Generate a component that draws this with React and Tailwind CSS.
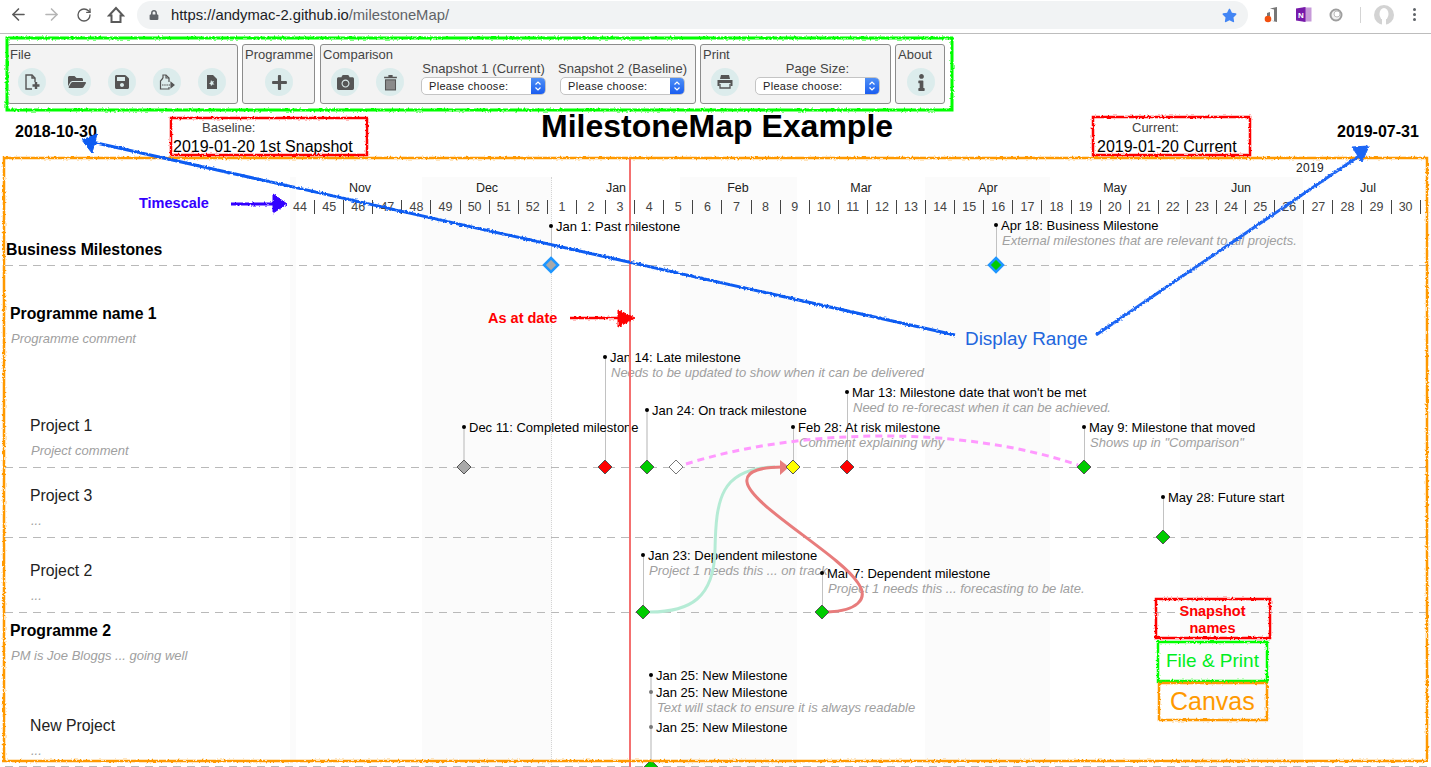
import React from "react";
import { ArrowLeft, ArrowRight, RotateCw } from "lucide-react";
import { FaLock, FaStar, FaFolderOpen, FaSave, FaPlus, FaCamera, FaInfo } from "react-icons/fa";

const Y0 = 158;
const weeks = [44,45,46,47,48,49,50,51,52,1,2,3,4,5,6,7,8,9,10,11,12,13,14,15,16,17,18,19,20,21,22,23,24,25,26,27,28,29,30];
const months = [["Nov",360],["Dec",487],["Jan",616],["Feb",738],["Mar",861],["Apr",988],["May",1115],["Jun",1241],["Jul",1368]];
const bands = [[290,296],[422,552],[680,797],[925,1050],[1180,1303]];
const hlines = [265,467,537,612,766];

const labels = [
  ["Business Milestones",6,250,"head"],
  ["Programme name 1",10,314,"head"],
  ["Programme comment",11,339,"note"],
  ["Project 1",30,426,"proj"],
  ["Project comment",31,451,"note"],
  ["Project 3",30,496,"proj"],
  ["...",31,521,"note"],
  ["Project 2",30,571,"proj"],
  ["...",31,596,"note"],
  ["Programme 2",10,631,"head"],
  ["PM is Joe Bloggs ... going well",11,656,"note"],
  ["New Project",30,726,"proj"],
  ["...",31,751,"note"],
];

const milestones = [
  { x:551, y:226, t:"Jan 1: Past milestone", dy:265, fill:"#a9a9a9", stroke:"#1e96ff", sw:2.5 },
  { x:996, y:225, t:"Apr 18: Business Milestone", c:"External milestones that are relevant to all projects.", dy:265, fill:"#00cc00", stroke:"#1e96ff", sw:2.5 },
  { x:605, y:357, t:"Jan 14: Late milestone", c:"Needs to be updated to show when it can be delivered", dy:467, fill:"#ff0000" },
  { x:847, y:392, t:"Mar 13: Milestone date that won't be met", c:"Need to re-forecast when it can be achieved.", dy:467, fill:"#ff0000" },
  { x:647, y:410, t:"Jan 24: On track milestone", dy:467, fill:"#00cc00", thick:true },
  { x:464, y:427, t:"Dec 11: Completed milestone", dy:467, fill:"#a9a9a9", thick:true },
  { x:793, y:427, t:"Feb 28: At risk milestone", c:"Comment explaining why", dy:467, fill:"#ffff00" },
  { x:1084, y:427, t:"May 9: Milestone that moved", c:'Shows up in "Comparison"', dy:467, fill:"#00cc00" },
  { x:1163, y:497, t:"May 28: Future start", dy:537, fill:"#00cc00" },
  { x:643, y:555, t:"Jan 23: Dependent milestone", c:"Project 1 needs this ... on track", dy:612, fill:"#00cc00" },
  { x:822, y:573, t:"Mar 7: Dependent milestone", c:"Project 1 needs this ... forecasting to be late.", dy:612, fill:"#00cc00" },
  { x:651, y:675, t:"Jan 25: New Milestone", dy:767, fill:"#00cc00", thick:true },
  { x:651, y:692, t:"Jan 25: New Milestone", c:"Text will stack to ensure it is always readable", gray:true },
  { x:651, y:727, t:"Jan 25: New Milestone", gray:true },
];

function Circle({ children }) {
  return <div className="w-[28px] h-[28px] rounded-full bg-[#dcecec] flex items-center justify-center text-[#555555] shrink-0">{children}</div>;
}

function Select() {
  return (
    <div className="w-[125px] h-[18px] flex rounded-[5px] border border-[#c4c4c4] bg-white overflow-hidden">
      <div className="flex-1 pl-[7px] text-[11px] leading-[16px] tracking-[0.3px] text-[#222222] whitespace-nowrap">Please choose:</div>
      <div className="w-[14px] bg-gradient-to-b from-[#4f8ff5] to-[#1a5cf0] flex items-center justify-center">
        <svg width="8" height="12" viewBox="0 0 8 12" fill="none" stroke="#ffffff" strokeWidth="1.2"><path d="M1.5 4.5 4 2l2.5 2.5M1.5 7.5 4 10l2.5-2.5" /></svg>
      </div>
    </div>
  );
}

function Panel({ title, className, children }) {
  return (
    <div className={`h-[60px] border border-[#8c8c8c] rounded-[3px] bg-[#f3f3f3] flex flex-col ${className}`}>
      <div className="pl-[2px] h-[17px] pt-[2px] text-[13px] leading-[15px] text-[#444444] whitespace-nowrap">{title}</div>
      <div className="flex-1 flex items-end pb-[7px]">{children}</div>
    </div>
  );
}

function SelectCol({ label }) {
  return (
    <div className="w-[125px] flex flex-col items-center">
      <div className="text-[13px] leading-[14px] tracking-[0.06px] text-[#444444] whitespace-nowrap pb-[1px]">{label}</div>
      <div className="mb-px"><Select /></div>
    </div>
  );
}

const FilePlus = () => (
  <svg width="18" height="18" viewBox="0 0 18 18" fill="none" stroke="#555555" strokeWidth="1.4"><path d="M9 16H3V2h6l3 3v4" /><path d="M9 2v3h3" /><path d="M13 9v7M9.5 12.5h7" strokeWidth="2.4" /></svg>
);
const FileExport = () => (
  <svg width="18" height="18" viewBox="0 0 18 18" fill="none" stroke="#555555" strokeWidth="1.2"><path d="M11 9V5L8 2H5v3" /><path d="M8 2v3h3" /><path d="M5 5 2.500 8v8H11v-2" /><path d="M4 12h8" strokeDasharray="1.500 0.700" /><path d="M13 9.500 16 12l-3 2.500z" fill="#555555" /></svg>
);
const FileImport = () => (
  <svg width="14" height="16" viewBox="0 0 14 16"><path fillRule="evenodd" fill="#555555" d="M2 1h6l4 4v10H2zM6 6l1 1.500 2-.5-1 2 1.500 1.500-2 0L6 12l-.5-2H4l1.500-1.500z" /></svg>
);
const Trash = () => (
  <svg width="15" height="17" viewBox="0 0 14 16"><path d="M5 1h4v1.500h4V4H1V2.500h4z" fill="#555555" /><rect x="2.300" y="5.500" width="9.400" height="9.500" fill="#8a8a8a" stroke="#555555" /></svg>
);
const Printer = () => (
  <svg width="18" height="16" viewBox="0 0 18 16"><path fill="#555555" d="M5 1h8l1 4H4zM1.500 6h15v6h-2V9h-11v3h-2z" /><path fill="none" stroke="#555555" strokeWidth="1.300" d="M4 10v4h10v-4" /></svg>
);
const House = () => (
  <svg className="ml-[1px]" width="18" height="18" viewBox="0 0 18 18" fill="none" stroke="#5a5a5a" strokeWidth="2"><path d="M9 2 2 9.500h2.500V16h9V9.500H16z" strokeLinejoin="miter" /></svg>
);

function BrowserBar() {
  return (
    <div className="h-[34px] border-b border-[#bdbdbd] flex items-start bg-white">
      <div className="w-[137px] h-[29px] flex items-center pl-[9px] gap-[14px] text-[#5a5a5a] shrink-0">
        <ArrowLeft size={19} strokeWidth={2} />
        <ArrowRight size={19} strokeWidth={2} className="text-[#b5b5b5]" />
        <RotateCw size={16} strokeWidth={2} className="ml-[1px]" />
        <House />
      </div>
      <div className="w-[1111px] h-[28px] mt-px rounded-full bg-[#f1f3f4] flex items-center pl-[12px] pr-[11px] shrink-0">
        <FaLock size={10} className="text-[#5f6368]" />
        <div className="ml-[12px] flex-1 text-[14.800px] text-[#202124] whitespace-nowrap">https://andymac-2.github.io<span className="text-[#5f6368]">/milestoneMap/</span></div>
        <FaStar size={15} className="text-[#4285f4]" />
      </div>
      <div className="flex items-center h-[29px] pl-[15px]">
        <svg width="16" height="16" viewBox="0 0 16 16"><path d="M7 1.500 14 0v15l-7-1.500 4 .5V2.500z" fill="#777777" /><path d="M4 6l3-1v4H4z" fill="#777777" /><circle cx="5" cy="12" r="3.300" fill="#f2500f" /></svg>
        <svg className="ml-[16px]" width="17" height="17" viewBox="0 0 17 17"><rect x="8" y="1.500" width="8.500" height="14" fill="#c79ad9" /><path d="M1 2.500 10.500 1v15L1 14.500z" fill="#7719aa" /><text x="3" y="11.500" fontSize="8" fontWeight="700" fill="#ffffff" fontFamily="Liberation Sans, sans-serif">N</text></svg>
        <svg className="ml-[17px]" width="14" height="14" viewBox="0 0 14 14"><circle cx="7" cy="7" r="5.500" fill="#f0f0f0" stroke="#9e9e9e" strokeWidth="2" /><circle cx="8" cy="6" r="3" fill="#ffffff" stroke="#bbbbbb" /></svg>
        <div className="ml-[17px] w-px h-[16px] bg-[#d4d4d4]"></div>
        <svg className="ml-[13px]" width="20" height="20" viewBox="0 0 20 20"><circle cx="10" cy="10" r="10" fill="#d3d3d3" /><ellipse cx="10" cy="9" rx="4.500" ry="6" fill="#ffffff" /><path d="M8 13h4v7H8z" fill="#ffffff" /></svg>
        <div className="ml-[19px] flex flex-col gap-[2px]">
          <div className="w-[3px] h-[3px] rounded-full bg-[#5f6368]"></div>
          <div className="w-[3px] h-[3px] rounded-full bg-[#5f6368]"></div>
          <div className="w-[3px] h-[3px] rounded-full bg-[#5f6368]"></div>
        </div>
      </div>
    </div>
  );
}

function Toolbar() {
  return (
    <div className="h-[76px] pt-[10px] pl-[7px] flex gap-[4px]">
      <Panel title="File" className="w-[231px]">
        <div className="flex gap-[17px] pl-[10px]">
          <Circle><FilePlus /></Circle>
          <Circle><FaFolderOpen size={18} /></Circle>
          <Circle><FaSave size={16} /></Circle>
          <Circle><FileExport /></Circle>
          <Circle><FileImport /></Circle>
        </div>
      </Panel>
      <Panel title="Programme" className="w-[73px]">
        <div className="pl-[22px]"><Circle><FaPlus size={17} /></Circle></div>
      </Panel>
      <Panel title="Comparison" className="w-[376px] ml-px">
        <div className="flex gap-[17px] pl-[10px] items-end">
          <Circle><FaCamera size={17} /></Circle>
          <Circle><Trash /></Circle>
          <div className="flex gap-[14px]">
            <SelectCol label="Snapshot 1 (Current)" />
            <SelectCol label="Snapshot 2 (Baseline)" />
          </div>
        </div>
      </Panel>
      <Panel title="Print" className="w-[191px]">
        <div className="flex gap-[16px] pl-[10px] items-end">
          <Circle><Printer /></Circle>
          <SelectCol label="Page Size:" />
        </div>
      </Panel>
      <Panel title="About" className="w-[50px]">
        <div className="pl-[11px]"><Circle><FaInfo size={17} /></Circle></div>
      </Panel>
    </div>
  );
}

function HeaderRow() {
  return (
    <div className="h-[48px] flex pl-[15px]">
      <div className="w-[158px] pt-[13px] text-[16px] leading-[17px] font-bold text-black whitespace-nowrap">2018-10-30</div>
      <div className="w-[368px] pt-[10px] whitespace-nowrap">
        <div className="pl-[29px] text-[13px] leading-[15px] text-[#444444]">Baseline:</div>
        <div className="pt-[2px] text-[16px] leading-[19px] text-black">2019-01-20 1st Snapshot</div>
      </div>
      <div className="w-[556px] text-[32px] leading-[33px] font-bold text-black whitespace-nowrap">MilestoneMap Example</div>
      <div className="w-[240px] pt-[10px] whitespace-nowrap">
        <div className="pl-[35px] text-[13px] leading-[15px] text-[#444444]">Current:</div>
        <div className="pt-[2px] text-[16px] leading-[19px] text-black">2019-01-20 Current</div>
      </div>
      <div className="pt-[13px] text-[16px] leading-[17px] font-bold text-black whitespace-nowrap">2019-07-31</div>
    </div>
  );
}

function Canvas() {
  return (
    <div className="relative h-[609px]">
      {bands.map(([a, b]) => (
        <div key={a} className="absolute bottom-0 bg-[#fbfbfb]" style={{ left: a, width: b - a, top: 177 - Y0 }} />
      ))}
      <div className="absolute left-[551px] top-[19px] bottom-0 border-l border-dotted border-[#d4d4d4]"></div>

      <div className="absolute left-[1296px] top-[3px] text-[12px] leading-[14px] tracking-[0.3px] text-[#222222]">2019</div>
      {months.map(([m, x]) => (
        <div key={m} className="absolute w-[60px] -ml-[30px] text-center text-[12.500px] leading-[14px] text-[#222222]" style={{ left: x, top: 188 - 7 - Y0 }}>{m}</div>
      ))}
      <div className="absolute left-[286px] top-[42px] flex">
        {weeks.map((w) => (
          <div key={w} className="w-[29.100px] h-[14px] border-r border-[#444444] text-center text-[12.500px] leading-[14px] text-[#444444]">{w}</div>
        ))}
      </div>

      {hlines.map((y) => (
        <div key={y} className="absolute left-[5px] right-[3px] h-px bg-[repeating-linear-gradient(90deg,#b9b9b9_0,#b9b9b9_8px,transparent_8px,transparent_14px)]" style={{ top: y - Y0 }} />
      ))}

      {labels.map(([t, x, y, k]) => (
        <div
          key={t + y}
          className={
            k === "head" ? "absolute whitespace-nowrap text-[15.800px] leading-[18px] font-bold text-black"
            : k === "proj" ? "absolute whitespace-nowrap text-[15.800px] leading-[18px] text-[#222222]"
            : "absolute whitespace-nowrap text-[13px] leading-[18px] italic text-[#a0a0a0]"
          }
          style={{ left: x, top: y - 9 - Y0 }}
        >{t}</div>
      ))}

      {milestones.map((m, i) => (
        <React.Fragment key={i}>
          {m.dy && (
            <div
              className={m.thick ? "absolute w-[2px] bg-[#d9d9d9]" : "absolute w-px bg-[#c2c2c2]"}
              style={{ left: m.thick ? m.x - 1 : m.x, top: m.y - Y0, height: m.dy - m.y }}
            />
          )}
          <div className={m.gray ? "absolute w-[4px] h-[4px] rounded-full bg-[#777777]" : "absolute w-[4px] h-[4px] rounded-full bg-black"} style={{ left: m.x - 2, top: m.y - 2 - Y0 }} />
          <div className="absolute whitespace-nowrap text-[13px] leading-[15px] text-black" style={{ left: m.x + 5, top: m.y - 7.5 - Y0 }}>{m.t}</div>
          {m.c && <div className="absolute whitespace-nowrap text-[13px] leading-[15px] italic text-[#a0a0a0]" style={{ left: m.x + 6, top: m.y + 8 - Y0 }}>{m.c}</div>}
        </React.Fragment>
      ))}

      <div className="absolute left-[629px] top-0 bottom-0 w-[2px] bg-[#f47070]"></div>

      <div className="absolute left-[139px] top-[36px] text-[14.500px] leading-[18px] font-bold text-[#3300ff] whitespace-nowrap">Timescale</div>
      <div className="absolute left-[488px] top-[151px] text-[14.500px] leading-[18px] font-bold text-[#ff0000] whitespace-nowrap">As at date</div>
      <div className="absolute left-[965px] top-[169px] text-[18.900px] leading-[24px] text-[#2266dd] whitespace-nowrap">Display Range</div>
      <div className="absolute left-[1160px] top-[445px] w-[105px] text-center text-[14.500px] leading-[17px] font-bold text-[#ff0000]">Snapshot names</div>
      <div className="absolute left-[1166px] top-[491px] text-[19px] leading-[24px] text-[#00ee22] whitespace-nowrap">File &amp; Print</div>
      <div className="absolute left-[1170px] top-[528px] text-[25px] leading-[30px] text-[#ff9900] whitespace-nowrap">Canvas</div>
    </div>
  );
}

function Annotations() {
  const diamonds = milestones.filter((m) => m.dy).map((m) => ({ x: m.x, y: m.dy, fill: m.fill, stroke: m.stroke || "#555555", sw: m.sw || 1 }));
  diamonds.push({ x: 676, y: 467, fill: "#ffffff", stroke: "#777777", sw: 1 });
  return (
    <svg className="absolute inset-0 pointer-events-none" width="1431" height="767" viewBox="0 0 1431 767" fill="none">
      <defs>
        <filter id="roughU" x="0" y="0" width="1431" height="767" filterUnits="userSpaceOnUse">
          <feTurbulence type="fractalNoise" baseFrequency="0.5" numOctaves="1" seed="3" result="n" />
          <feDisplacementMap in="SourceGraphic" in2="n" scale="3" xChannelSelector="R" yChannelSelector="G" />
        </filter>
      </defs>

      <path d="M650 612C690 612 714 598 715 550C716 500 720 468 775 467" stroke="#b5ebd5" strokeWidth="3" />
      <path d="M828 612C855 611 870 600 858 583C840 555 750 505 747 482C745 470 765 467 782 467" stroke="#e87c7c" strokeWidth="3" />
      <path d="M780 460 789 467 780 475z" fill="#e87c7c" />
      <path d="M686 464C800 428 960 425 1078 465" stroke="#ff99ff" strokeWidth="3" strokeDasharray="7 5" />

      {diamonds.map((d, i) => (
        <path key={i} d={`M${d.x} ${d.y - 7}L${d.x + 7} ${d.y}L${d.x} ${d.y + 7}L${d.x - 7} ${d.y}Z`} fill={d.fill} stroke={d.stroke} strokeWidth={d.sw} />
      ))}

      <g filter="url(#roughU)">
        <rect x="4" y="158" width="1423" height="603" stroke="#ff9900" strokeWidth="2.500" />
        <rect x="7" y="38" width="945" height="72" stroke="#00ff00" strokeWidth="3" />
        <rect x="171" y="118" width="196" height="37" stroke="#ff0000" strokeWidth="2.500" />
        <rect x="1093" y="117" width="157" height="38" stroke="#ff0000" strokeWidth="2.500" />
        <rect x="1156" y="599" width="114" height="39" stroke="#ff0000" strokeWidth="2.500" />
        <rect x="1158" y="642" width="109" height="39" stroke="#00ff00" strokeWidth="2.500" />
        <rect x="1159" y="683" width="108" height="37" stroke="#ff9900" strokeWidth="2.500" />
        <path d="M92 142 955 335" stroke="#0d5cf2" strokeWidth="3" />
        <path d="M82 140 97 134 92 153z" fill="#0d5cf2" stroke="#0d5cf2" />
        <path d="M1096 335 1362 154" stroke="#1f66f5" strokeWidth="3" />
        <path d="M1369 146 1352 147 1362 162z" fill="#1f66f5" stroke="#1f66f5" />
        <path d="M231 204H275" stroke="#3300ff" strokeWidth="3" />
        <path d="M273 194 287 204 273 213z" fill="#3300ff" stroke="#3300ff" />
        <path d="M570 318H620" stroke="#ff0000" strokeWidth="2.500" />
        <path d="M618 310 635 318 618 327z" fill="#ff0000" stroke="#ff0000" />
      </g>
    </svg>
  );
}

export default function App() {
  return (
    <div className="relative w-[1431px] h-[767px] overflow-hidden bg-white font-['Liberation_Sans',Arial,sans-serif]">
      <BrowserBar />
      <Toolbar />
      <HeaderRow />
      <Canvas />
      <Annotations />
    </div>
  );
}
